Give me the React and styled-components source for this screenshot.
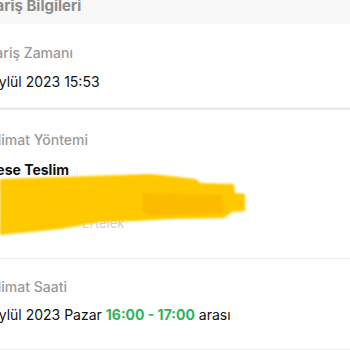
import styled, { createGlobalStyle } from "styled-components";

const GlobalStyle = createGlobalStyle`
  html, body {
    margin: 0;
    padding: 0;
    background: #fff;
    overflow: hidden;
  }
  body {
    font-family: Inter, "Noto Sans", "Liberation Sans", sans-serif;
    color: #111;
  }
`;

const Page = styled.div`
  width: 420px;
  margin-left: -26px;
  margin-top: -14px;
`;

const Header = styled.div`
  height: 38px;
  display: flex;
  align-items: center;
  background: #f8f8f8;
  font-size: 15px;
  font-weight: 700;
  color: #8c8c8c;
  text-indent: -2px;
`;

const Section = styled.div`
  position: relative;
  display: flex;
  flex-direction: column;
  padding: ${(p) => p.$pad};
  border-bottom: 1px solid ${(p) => (p.$double ? "#f4f4f4" : "#ececec")};
  margin-bottom: ${(p) => (p.$double ? "3px" : "0")};
  box-shadow: ${(p) => (p.$double ? "0 4px 0 -2px #e9e9e9" : "none")};
`;

const Label = styled.div`
  font-size: 14px;
  font-weight: 500;
  color: #999;
  line-height: 18px;
`;

const Value = styled.div`
  margin-top: ${(p) => p.$gap || "11px"};
  font-size: 14px;
  font-weight: ${(p) => (p.$bold ? 700 : 400)};
  color: #111;
  line-height: 20px;
  text-indent: ${(p) => p.$shift || "0"};
  white-space: nowrap;
`;

const Green = styled.span`
  color: #2fb45a;
  font-weight: 700;
`;

const Faint = styled.div`
  margin-top: 34px;
  padding-left: 108px;
  font-size: 13px;
  color: #d2d2d2;
  line-height: 18px;
`;

const Scribble = styled.svg`
  position: absolute;
  left: 26px;
  top: 62px;
  pointer-events: none;
`;

export default function App() {
  return (
    <>
      <GlobalStyle />
      <Page>
        <Header>Sipariş Bilgileri</Header>

        <Section $pad="20px 0 15px" $double>
          <Label>Sipariş Zamanı</Label>
          <Value $gap="10px" $shift="-5px">24 Eylül 2023 15:53</Value>
        </Section>

        <Section $pad="20px 0 26px">
          <Label>Teslimat Yöntemi</Label>
          <Value $bold $gap="11px" $shift="-2px">Adrese Teslim</Value>
          <Faint>Ertelek</Faint>
          <Scribble width="250" height="66" viewBox="0 0 250 66">
            <defs>
              <filter id="soft" x="-5%" y="-10%" width="110%" height="120%">
                <feGaussianBlur stdDeviation="0.9" />
              </filter>
            </defs>
            <g filter="url(#soft)">
              <path
                d="M0 6 L150 1 L170 3 L196 6 L200 10 L234 11 L235 20 L245 21 L245 38 L232 39 L224 45 L170 46 L135 48 L100 49 L60 56 L20 60 L0 62 Z"
                fill="#ffc905"
              />
              <path
                d="M142 20 L222 22 L224 40 L200 41 L150 43 L142 38 Z"
                fill="#fbbb06"
              />
            </g>
          </Scribble>
        </Section>

        <Section $pad="19px 0 24px">
          <Label>Teslimat Saati</Label>
          <Value $gap="9px" $shift="-5px">
            24 Eylül 2023 Pazar <Green>16:00 - 17:00</Green> arası
          </Value>
        </Section>
      </Page>
    </>
  );
}
